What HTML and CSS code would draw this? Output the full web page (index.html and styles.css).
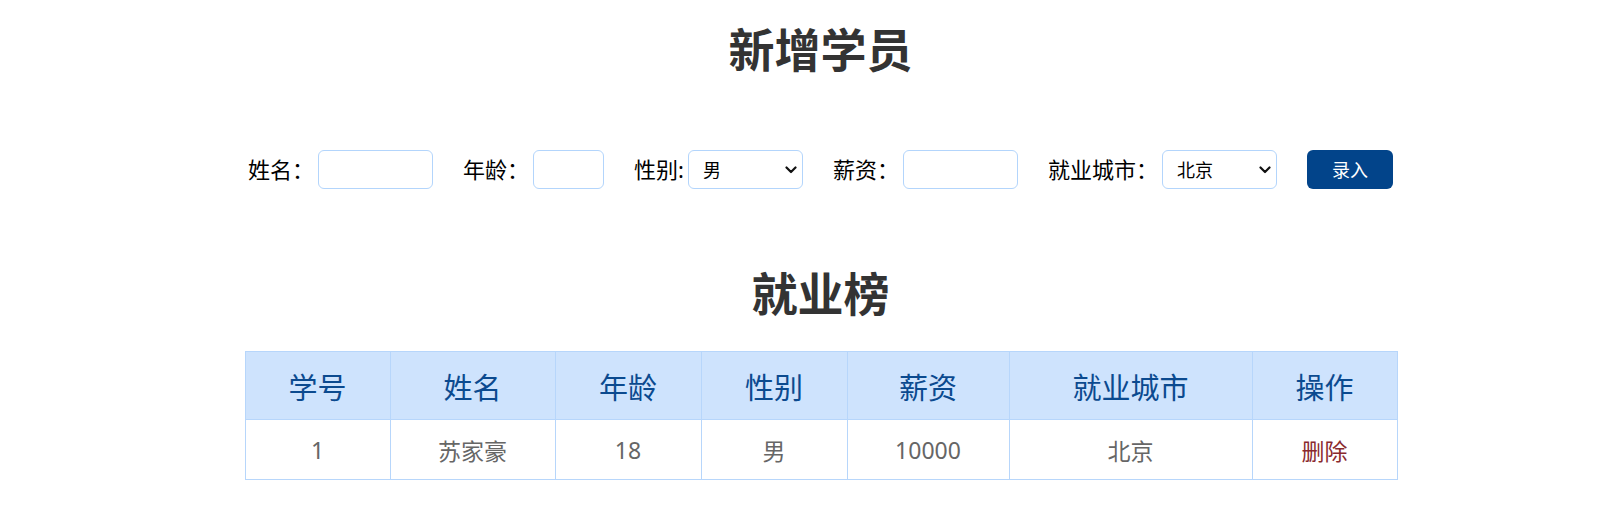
FILE: index.html
```html
<!DOCTYPE html>
<html lang="zh-CN">
<head>
<meta charset="utf-8">
<title>新增学员</title>
<link rel="stylesheet" href="styles.css">
</head>
<body>
<div class="page">
  <h1 class="title">新增学员</h1>
  <form class="form-row">
    <label class="field"><span class="label">姓名：</span><input class="control name" type="text"></label>
    <label class="field"><span class="label">年龄：</span><input class="control age" type="text"></label>
    <label class="field"><span class="label">性别:</span><span class="select-wrap"><select class="control sel"><option>男</option><option>女</option></select><svg class="chev" width="12" height="8" viewBox="0 0 12 8"><path d="M1.5 1.5 L6 6 L10.5 1.5" fill="none" stroke="#111" stroke-width="2.2" stroke-linecap="round" stroke-linejoin="round"/></svg></span></label>
    <label class="field"><span class="label">薪资：</span><input class="control salary" type="text"></label>
    <label class="field"><span class="label">就业城市：</span><span class="select-wrap"><select class="control sel"><option>北京</option><option>上海</option></select><svg class="chev" width="12" height="8" viewBox="0 0 12 8"><path d="M1.5 1.5 L6 6 L10.5 1.5" fill="none" stroke="#111" stroke-width="2.2" stroke-linecap="round" stroke-linejoin="round"/></svg></span></label>
    <button class="btn" type="button">录入</button>
  </form>
  <h2 class="title sub">就业榜</h2>
  <table class="list">
    <colgroup>
      <col class="w1"><col class="w2"><col class="w3"><col class="w4"><col class="w5"><col class="w6"><col class="w7">
    </colgroup>
    <thead>
      <tr><th>学号</th><th>姓名</th><th>年龄</th><th>性别</th><th>薪资</th><th>就业城市</th><th>操作</th></tr>
    </thead>
    <tbody>
      <tr><td>1</td><td>苏家豪</td><td>18</td><td>男</td><td>10000</td><td>北京</td><td><a class="del" href="#">删除</a></td></tr>
    </tbody>
  </table>
</div>
</body>
</html>
```

FILE: styles.css
```css
* { box-sizing: border-box; }
body {
  margin: 0;
  padding-left: 21px;
  font-family: "Noto Sans", "Noto Sans CJK SC", sans-serif;
  color: #000;
  background: #fff;
}
.page {
  width: 1152px;
  margin: 0 auto;
}
.title {
  margin: 17px 0 0;
  font-size: 46px;
  line-height: 60px;
  font-weight: 700;
  color: #333;
  text-align: center;
  font-family: "Noto Sans CJK SC", sans-serif;
}
.title.sub { margin-top: 72px; }
.form-row {
  margin-top: 73px;
  display: flex;
  justify-content: center;
  align-items: center;
  gap: 30px;
}
.field {
  display: flex;
  align-items: center;
  font-size: 22px;
}
.label { line-height: 39px; }
.control {
  height: 39px;
  border: 1px solid #b3d5fc;
  border-radius: 6px;
  margin-left: 4px;
  font-size: 18px;
  font-family: "Noto Sans", "Noto Sans CJK SC", sans-serif;
  background: #fff;
  outline: none;
}
.name, .salary { width: 115px; }
.age { width: 71px; }
.select-wrap { position: relative; display: flex; }
.sel {
  width: 115px;
  appearance: none;
  -webkit-appearance: none;
  padding: 0 0 0 14px;
  color: #000;
}
.chev {
  position: absolute;
  right: 6px;
  top: 16px;
  pointer-events: none;
}
.btn {
  width: 86px;
  height: 39px;
  border: none;
  border-radius: 6px;
  background: #02448a;
  color: #fff;
  font-size: 18px;
  font-family: "Noto Sans", "Noto Sans CJK SC", sans-serif;
  margin-top: -1px;
}
.list {
  margin-top: 30px;
  width: 1152px;
  border-collapse: collapse;
  table-layout: fixed;
  text-align: center;
}
.w1 { width: 145px; }
.w2 { width: 165px; }
.w3 { width: 146px; }
.w4 { width: 146px; }
.w5 { width: 162px; }
.w6 { width: 243px; }
.w7 { width: 145px; }
.list th, .list td {
  border: 1px solid #b7d6fb;
  padding: 0;
}
.list th {
  height: 68px;
  background: #cee3fd;
  color: #0b4a8f;
  font-size: 29px;
  font-weight: 400;
}
.list td {
  height: 60px;
  color: #666;
  font-size: 23px;
}
.del {
  color: #8a2a2e;
  text-decoration: none;
}
```
